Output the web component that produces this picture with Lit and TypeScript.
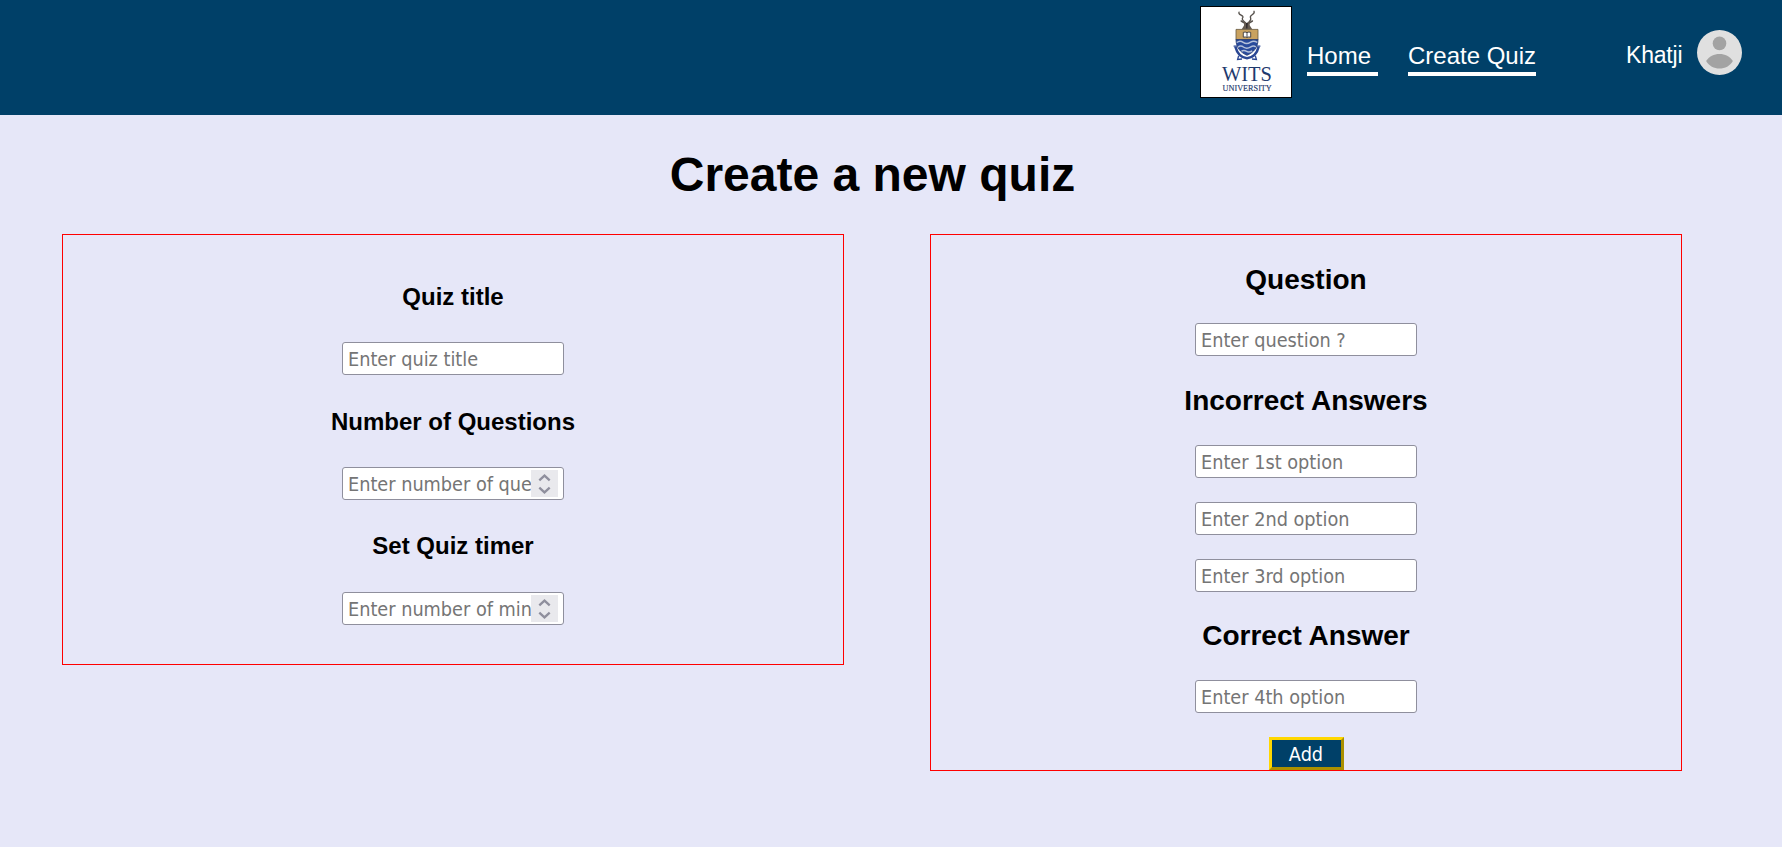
import { LitElement, html, css } from "lit";
import { customElement, property } from "lit/decorators.js";

@customElement("wits-logo")
class WitsLogo extends LitElement {
  static styles = css`
    :host { display: block; width: 92px; height: 92px; }
    svg { display: block; }
    .serif { font-family: "Liberation Serif", serif; fill: #1f3a6e; }
    .name { font-size: 20.5px; }
    .sub { font-size: 8px; stroke: #1f3a6e; stroke-width: 0.15px; }
  `;
  render() {
    return html`<svg width="92" height="92" viewBox="0 0 92 92">
      <rect x="0.5" y="0.5" width="91" height="91" fill="#fff" stroke="#000" />
      <g fill="none" stroke="#57524d" stroke-linecap="round">
        <path stroke-width="1.3" d="M39 6.2 C37.6 9.2 45.2 9.4 42.4 12.2 C41.6 14 44.2 15.6 45.6 17" />
        <path stroke-width="1.3" d="M54 5.2 C55.8 8.6 48.6 9 50.6 12 C51.6 14 49.4 15.6 48 17" />
        <path stroke-width="1.5" d="M41.2 15 L45 17.4 M52.4 15 L48.6 17.4" />
      </g>
      <path d="M44.2 15.6 L46.8 17 L49.4 15.6 L49.8 19.5 L52.4 23.5 H41.6 L44 19.5 Z" fill="#665c52" />
      <path d="M46 17 L47.8 17 L47.4 22.6 H46.2 Z" fill="#2f2a2b" />
      <path d="M36 23.4 H58 V34 H36 Z" fill="#c9a260" stroke="#65583f" stroke-width="0.8" />
      <path d="M36 33.6 H58 C58 41 54 46.4 47 49.3 C40 46.4 36 41 36 33.6 Z" fill="#284a9c" stroke="#24396f" stroke-width="0.8" />
      <g fill="none" stroke="#b4c0da" stroke-width="1.4">
        <path d="M36.8 36.6 C39 34.6 41 34.8 43.2 36.4 S48.2 37.8 50.6 36.2 S55 35 57.2 36.4" />
        <path d="M38 41.2 C40 39.4 41.8 39.8 43.8 41.2 S48.6 42.2 50.8 40.8 S54.6 39.8 55.8 41" />
        <path d="M41.5 45.2 C43.6 44 45 44.4 46.6 45.4 S50.4 45.8 52.2 44.8" />
      </g>
      <path d="M43.3 26.4 Q45.2 25.6 47 26.6 Q48.8 25.6 50.7 26.4 V31.2 Q48.8 30.6 47 31.4 Q45.2 30.6 43.3 31.2 Z M47 26.6 V31.4" fill="#fff" stroke="#3c3a3b" stroke-width="0.9" />
      <path d="M35.4 40.8 C37.4 48.6 42 51.8 47 52.2 C52 51.8 56.8 48.6 58.6 40.8" fill="none" stroke="#2a4794" stroke-width="2.6" />
      <path d="M33.6 40.2 L37.2 40.2 M56.8 40.2 L60.4 40.2 M38.6 50 L37.6 53.4 L42 53 M55.4 50 L56.4 53.4 L52 53" fill="none" stroke="#2a4794" stroke-width="1.3" />
      <text class="serif name" x="22" y="75" textLength="50" lengthAdjust="spacingAndGlyphs">WITS</text>
      <text class="serif sub" x="22.6" y="84.7" textLength="49.2" lengthAdjust="spacingAndGlyphs">UNIVERSITY</text>
    </svg>`;
  }
}

@customElement("quiz-input")
class QuizInput extends LitElement {
  @property() placeholder = "";
  @property({ type: Boolean }) numeric = false;
  static styles = css`
    :host { display: block; width: 222px; height: 33px; }
    .field {
      box-sizing: border-box; width: 100%; height: 100%;
      display: flex; align-items: center;
      padding: 0 5px;
      background: #fff; border: 1px solid #8f8f9d; border-radius: 3px;
    }
    input {
      flex: 1; min-width: 0; box-sizing: border-box; height: 29px;
      padding: 2px 0 0; margin: 0;
      border: 0; outline: 0; background: none; color: #000;
      font: 19.7px "DejaVu Sans Condensed", "DejaVu Sans", sans-serif;
      font-stretch: condensed;
    }
    input::placeholder { color: #757575; opacity: 1; }
    .spin { display: block; flex: none; background: #e9e9ed; }
  `;
  render() {
    return html`<div class="field">
      <input type="text" placeholder=${this.placeholder} />
      ${this.numeric
        ? html`<svg class="spin" width="27" height="27" viewBox="0 0 27 27" fill="none" stroke="#8f8f9d" stroke-width="2.3">
            <path d="M8.3 10.4 L13.5 5.6 L18.7 10.4 M8.3 17.6 L13.5 22.4 L18.7 17.6" />
          </svg>`
        : null}
    </div>`;
  }
}

@customElement("app-root")
class AppRoot extends LitElement {
  static styles = css`
    :host {
      display: block; min-height: 847px; background: #e6e7f8; color: #000;
      font-family: "Liberation Sans", Arial, sans-serif;
    }
    header {
      box-sizing: border-box; height: 115px; padding: 6px 40px 0 0;
      display: flex; justify-content: flex-end; align-items: flex-start;
      background: #004068; color: #fff; font-size: 24px; line-height: 27px;
    }
    .link { margin-top: 36px; padding-bottom: 3px; border-bottom: 4px solid #fff; white-space: pre; }
    .home { margin-left: 15px; width: 71px; }
    .create { margin-left: 30px; width: 128px; }
    .user { margin: 36px 0 0 90px; width: 71px; font-size: 23px; letter-spacing: -0.2px; }
    .avatar { display: block; margin-top: 24px; }
    h1 { margin: 32px 37px 32px 0; text-align: center; font-size: 48px; line-height: 55px; }
    main { display: flex; align-items: flex-start; gap: 86px; padding-left: 62px; }
    section {
      box-sizing: border-box; border: 1px solid #f00;
      display: flex; flex-direction: column; align-items: center;
    }
    .setup { width: 782px; height: 431px; padding-top: 48px; }
    .question { width: 752px; height: 537px; padding-top: 29px; }
    h2, h3 { margin: 0; }
    h3 { font-size: 24px; line-height: 27px; margin-bottom: 32px; }
    .setup quiz-input { margin-bottom: 33px; }
    .setup .second { margin-bottom: 32px; }
    .setup .timer { margin-bottom: 33px; }
    h2 { font-size: 28px; line-height: 32px; margin-bottom: 27px; }
    .question .wide, .question .correct { margin-bottom: 28px; }
    .question quiz-input { margin-bottom: 24px; }
    .question .first { margin-bottom: 29px; }
    .question .last { margin-bottom: 28px; }
    button {
      box-sizing: border-box; width: 75px; height: 33px; padding: 1px 0 0;
      border: 3px outset #ffd700; background: #004068; color: #fff;
      font: 19.7px "DejaVu Sans Condensed", "DejaVu Sans", sans-serif;
      font-stretch: condensed;
    }
  `;
  render() {
    return html`
      <header>
        <wits-logo></wits-logo>
        <div class="link home">Home </div>
        <div class="link create">Create Quiz</div>
        <div class="user">Khatji</div>
        <svg class="avatar" width="45" height="45" viewBox="0 0 45 45">
          <circle cx="22.5" cy="22.5" r="22.5" fill="#e0e0e0" />
          <circle cx="22.5" cy="13.4" r="6.8" fill="#a3a3a3" />
          <path d="M9.1 31 C12 26.4 17 24 22.5 24 S33 26.4 35.9 31 C33 36 28 38.5 22.5 38.5 S12 36 9.1 31 Z" fill="#a3a3a3" />
        </svg>
      </header>
      <h1>Create a new quiz</h1>
      <main>
        <section class="setup">
          <h3>Quiz title</h3>
          <quiz-input placeholder="Enter quiz title"></quiz-input>
          <h3>Number of Questions</h3>
          <quiz-input class="second" numeric placeholder="Enter number of questions"></quiz-input>
          <h3 class="timer">Set Quiz timer</h3>
          <quiz-input numeric placeholder="Enter number of minutes"></quiz-input>
        </section>
        <section class="question">
          <h2>Question</h2>
          <quiz-input class="first" placeholder="Enter question ?"></quiz-input>
          <h2 class="wide">Incorrect Answers</h2>
          <quiz-input placeholder="Enter 1st option"></quiz-input>
          <quiz-input placeholder="Enter 2nd option"></quiz-input>
          <quiz-input class="last" placeholder="Enter 3rd option"></quiz-input>
          <h2 class="correct">Correct Answer</h2>
          <quiz-input placeholder="Enter 4th option"></quiz-input>
          <button>Add</button>
        </section>
      </main>
    `;
  }
}
